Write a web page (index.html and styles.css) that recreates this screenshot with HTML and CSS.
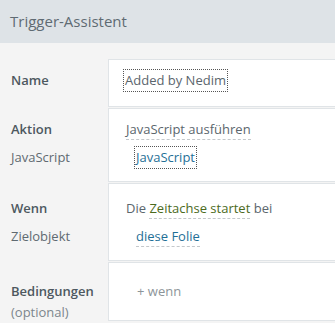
FILE: index.html
```html
<!DOCTYPE html>
<html lang="de">
<head>
    <meta charset="UTF-8">
    <title>Trigger-Assistent</title>
    <link rel="stylesheet" href="styles.css">
</head>
<body>
<div class="wizard">

    <!--Kopf-->
    <div class="head">Trigger-Assistent</div>

    <div class="rows">
        <!--Name-->
        <div class="row r1">
            <div class="label">
                <p class="strong">Name</p>
            </div>
            <div class="field">
                <p><span class="focus">Added by Nedim</span></p>
            </div>
        </div>

        <!--Aktion-->
        <div class="row r2">
            <div class="label">
                <p class="strong">Aktion</p>
                <p>JavaScript</p>
            </div>
            <div class="field">
                <p><span class="dash">JavaScript ausführen</span></p>
                <p class="sub"><span class="link focus">JavaScript</span></p>
            </div>
        </div>

        <!--Wenn-->
        <div class="row r3">
            <div class="label">
                <p class="strong">Wenn</p>
                <p>Zielobjekt</p>
            </div>
            <div class="field">
                <p>Die <span class="dash green">Zeitachse startet</span> bei</p>
                <p class="sub"><span class="dash link">diese Folie</span></p>
            </div>
        </div>

        <!--Bedingungen-->
        <div class="row r4">
            <div class="label">
                <p class="strong">Bedingungen</p>
                <p class="small">(optional)</p>
            </div>
            <div class="field">
                <p class="sub add">+ wenn</p>
            </div>
        </div>
    </div>
</div>
</body>
</html>
```

FILE: styles.css
```css
*{
    margin: 0;
    padding: 0;
}
body{
    background: #f4f4f4;
    font-family: "Open Sans", "Noto Sans", sans-serif;
    font-size: 13px;
    color: #5b666d;
}
.wizard .head{
    height: 43px;
    line-height: 43px;
    padding-left: 10px;
    background: #dee3e7;
    font-size: 15px;
    color: #5f6b73;
}
.wizard .rows{
    padding-top: 16px;
}
.wizard .row{
    display: flex;
    margin-bottom: 1px;
}
.wizard .row p{
    line-height: 28px;
    white-space: nowrap;
}
.wizard .label{
    width: 108px;
    box-sizing: border-box;
    padding-left: 11px;
    border-top: 1px solid transparent;
    color: #5f6a71;
}
.wizard .label .strong{
    font-weight: 600;
    color: #4d585f;
}
.wizard .label .small{
    line-height: 14px;
    color: #7c868c;
}
.wizard .field{
    flex: 1;
    background: #fff;
    border: 1px solid #e0e4e7;
    border-right: none;
    padding-left: 17px;
}
.wizard .r1 .label, .wizard .r1 .field{
    padding-top: 6px;
    padding-bottom: 12px;
}
.wizard .r2 .label, .wizard .r2 .field{
    padding-top: 6px;
    padding-bottom: 10px;
}
.wizard .r3 .label, .wizard .r3 .field{
    padding-top: 10px;
    padding-bottom: 10px;
}
.wizard .r4 .label, .wizard .r4 .field{
    padding-top: 14px;
    padding-bottom: 2px;
}
.wizard .field .sub{
    padding-left: 10px;
}
.wizard .field .add{
    padding-left: 11px;
}
.wizard .focus{
    outline: 1px dotted #555;
    outline-offset: 0;
    padding: 1px 1px 2px;
    margin-left: -2px;
}
.wizard .sub .focus{
    margin-left: -1px;
}
.wizard .dash{
    border-bottom: 1px dashed #c4c8cb;
    padding-bottom: 1px;
}
.wizard .link{
    color: #1f6f96;
}
.wizard .green{
    color: #4b6a1c;
}
.wizard .add{
    color: #8d9599;
}
```
